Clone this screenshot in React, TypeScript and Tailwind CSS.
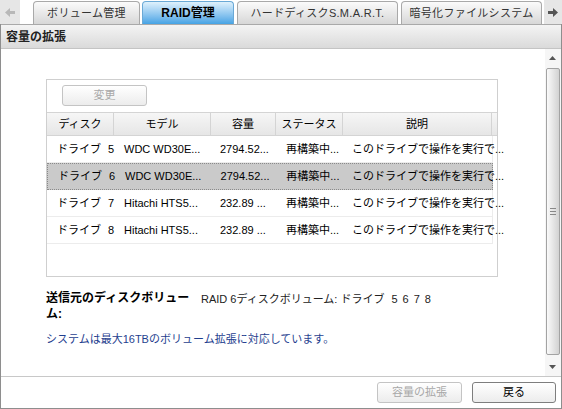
import React from "react";

const rows = [
  { disk: "5", model: "WDC WD30E...", size: "2794.52...", status: "再構築中...", note: "このドライブで操作を実行で..." },
  { disk: "6", model: "WDC WD30E...", size: "2794.52...", status: "再構築中...", note: "このドライブで操作を実行で...", selected: true },
  { disk: "7", model: "Hitachi HTS5...", size: " 232.89 ...", status: "再構築中...", note: "このドライブで操作を実行で..." },
  { disk: "8", model: "Hitachi HTS5...", size: " 232.89 ...", status: "再構築中...", note: "このドライブで操作を実行で..." },
];

function Arrow({ dir, color }: { dir: "left" | "right"; color: string }) {
  return (
    <svg width="10" height="9" viewBox="0 0 10 9" className={dir === "left" ? "rotate-180" : ""}>
      <path d="M0 3h5V0l5 4.5L5 9V6H0z" fill={color} />
    </svg>
  );
}

function Tab({ label, w, active }: { label: string; w: string; active?: boolean }) {
  return (
    <div
      className={
        "h-[23px] rounded-t-[4px] border border-b-0 flex items-center justify-center " +
        w +
        (active
          ? " border-[#6aa9d6] bg-linear-to-b from-[#dff1fc] to-[#44a3e4] font-bold text-[12px]"
          : " border-[#a9a9a9] bg-linear-to-b from-[#fbfbfb] to-[#d7d7d7] text-[#333] tracking-[0.3px]")
      }
    >
      {label}
    </div>
  );
}

function Btn({ label, disabled, w }: { label: string; disabled?: boolean; w: string }) {
  return (
    <div
      className={
        "h-[21px] rounded-[3px] border flex items-center justify-center bg-linear-to-b from-[#ffffff] to-[#ececec] " +
        w +
        (disabled ? " border-[#c4c4c4] text-[#a8a8a8]" : " border-[#7e7e7e] text-black")
      }
    >
      {label}
    </div>
  );
}

const cols = ["w-[67px]", "w-[97px]", "w-[65px]", "w-[67px]", "w-[149px]"];

export default function App() {
  return (
    <div className="w-[562px] h-[409px] flex flex-col bg-white text-[11px] text-black overflow-hidden font-['Liberation_Sans','Noto_Sans_CJK_JP',sans-serif]">
      {/* tab strip */}
      <div className="h-[24px] shrink-0 flex items-end">
        <div className="w-[20px] h-full bg-[#e6e6e6] flex items-center justify-center">
          <Arrow dir="left" color="#b8b8b8" />
        </div>
        <div className="w-[13px]" />
        <Tab label="ボリューム管理" w="w-[107px]" />
        <div className="w-[2px]" />
        <Tab label="RAID管理" w="w-[92px]" active />
        <div className="w-[3px]" />
        <Tab label="ハードディスクS.M.A.R.T." w="w-[161px]" />
        <div className="w-[3px]" />
        <Tab label="暗号化ファイルシステム" w="w-[141px]" />
        <div className="w-[2px]" />
        <div className="w-[18px] h-full bg-[#e6e6e6] flex items-center justify-center">
          <Arrow dir="right" color="#555" />
        </div>
      </div>

      <div className="flex-1 min-h-0 flex flex-col border-l border-r border-b border-[#8e8e8e]">
        <div className="h-[25px] shrink-0 border-t border-b border-t-[#a9a9a9] border-b-[#c4c4c4] bg-linear-to-b from-[#f4f4f4] to-[#dadada] flex items-center px-[5px] font-bold text-[12px] text-[#222]">
          容量の拡張
        </div>

        <div className="flex-1 min-h-0 flex">
          <div className="flex-1 pl-[45px] pt-[30px]">
            <div className="w-[452px] h-[198px] border border-[#cfcfcf] flex flex-col">
              <div className="h-[32px] pl-[15px] pt-[5px]">
                <Btn label="変更" disabled w="w-[85px]" />
              </div>
              <div className="h-[24px] flex border-t border-b border-[#d4d4d4] bg-linear-to-b from-[#f6f6f6] to-[#e6e6e6]">
                {["ディスク", "モデル", "容量", "ステータス", "説明"].map((h, i) => (
                  <div key={h} className={cols[i] + " flex items-center justify-center border-r border-[#d4d4d4]"}>
                    {h}
                  </div>
                ))}
                <div className="flex-1" />
              </div>
              {rows.map((r) => (
                <div
                  key={r.disk}
                  className={
                    "h-[27px] w-[446px] flex items-center whitespace-nowrap " +
                    (r.selected
                      ? "bg-[#cacaca] border border-dotted border-[#8a8a8a]"
                      : "border-b border-r border-[#ececec]")
                  }
                >
                  <div className={cols[0] + " pl-[10px]"}>
                    ドライブ<span className="ml-[7px]">{r.disk}</span>
                  </div>
                  <div className={cols[1] + " pl-[10px]"}>{r.model}</div>
                  <div className={cols[2] + " pl-[9px]"}>{r.size}</div>
                  <div className={cols[3] + " pl-[10px]"}>{r.status}</div>
                  <div className={cols[4] + " pl-[9px]"}>{r.note}</div>
                </div>
              ))}
            </div>

            <div className="mt-[13px] flex">
              <div className="w-[148px] font-bold text-[12px] leading-[16px]">送信元のディスクボリューム:</div>
              <div className="ml-[7px] pt-[1px] leading-[16px] text-[#222] flex">
                <span>RAID 6ディスクボリューム: ドライブ</span>
                <span className="ml-[7px] flex gap-[5px]">
                  <span>5</span>
                  <span>6</span>
                  <span>7</span>
                  <span>8</span>
                </span>
              </div>
            </div>
            <div className="mt-[9px] text-[#1f3f8f]">システムは最大16TBのボリューム拡張に対応しています。</div>
          </div>

          {/* scrollbar */}
          <div className="w-[16px] shrink-0 flex flex-col items-center bg-[#f6f6f6] pr-[1px]">
            <div className="h-[18px] w-full flex items-center justify-center">
              <svg width="7" height="4" viewBox="0 0 7 4">
                <path d="M0 4L3.5 0L7 4z" fill="#555" />
              </svg>
            </div>
            <div className="flex-1 w-[14px] mt-[1px] mb-[3px] rounded-[2px] border border-[#a3a3a3] bg-linear-to-r from-[#fafafa] to-[#d2d2d2] flex items-center justify-center">
              <div className="flex flex-col gap-[2px]">
                <div className="w-[6px] h-px bg-[#888]" />
                <div className="w-[6px] h-px bg-[#888]" />
                <div className="w-[6px] h-px bg-[#888]" />
              </div>
            </div>
            <div className="h-[18px] w-full flex items-center justify-center">
              <svg width="7" height="4" viewBox="0 0 7 4">
                <path d="M0 0L3.5 4L7 0z" fill="#555" />
              </svg>
            </div>
          </div>
        </div>

        <div className="h-[32px] shrink-0 border-t border-[#c8c8c8] flex justify-end items-start pt-[5px] pr-[5px] gap-[10px]">
          <Btn label="容量の拡張" disabled w="w-[85px]" />
          <Btn label="戻る" w="w-[84px]" />
        </div>
      </div>
    </div>
  );
}
